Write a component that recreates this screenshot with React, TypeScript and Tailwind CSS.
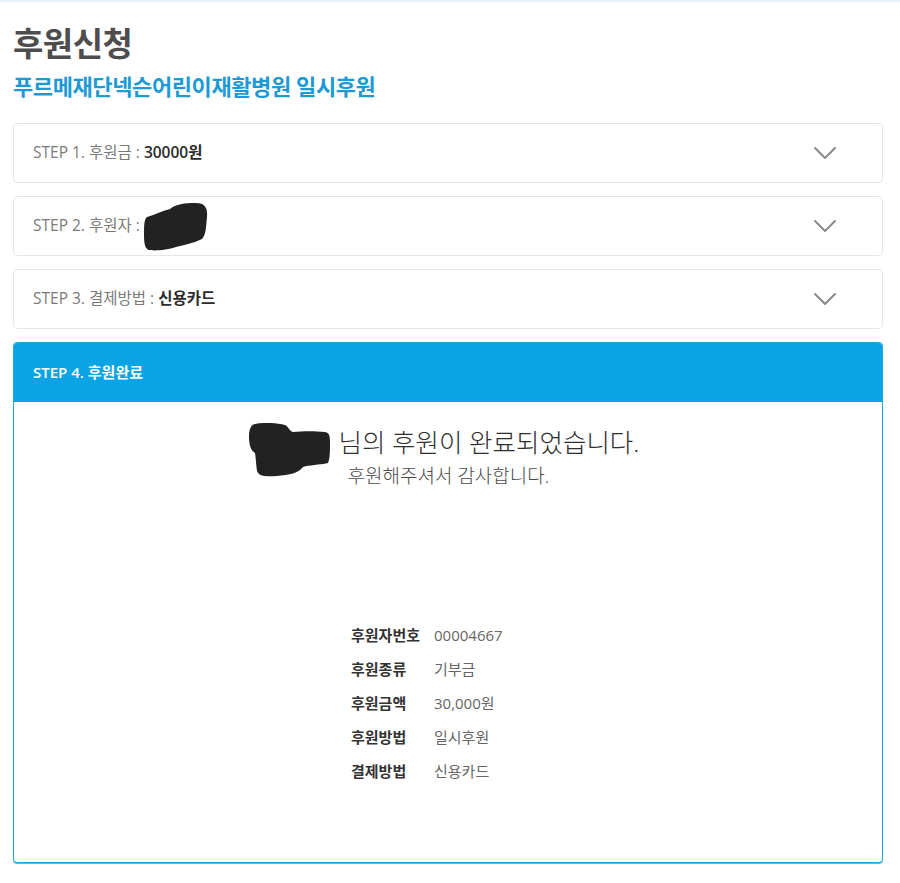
import { ChevronDown } from 'lucide-react'

const font = { fontFamily: '"Open Sans", "Noto Sans CJK KR", sans-serif' }

function StepCard({ label, value, blob }: { label: string; value?: string; blob?: boolean }) {
  return (
    <div className="flex h-[60px] items-center justify-between rounded-[4px] border border-[#e6e6e6] bg-white pl-[19px] pr-[37px]">
      <div className="flex items-center text-[15.5px] text-[#7a7a7a]">
        <span>{label} :&nbsp;</span>
        {value && <span className="font-semibold text-[#2b2b2b]">{value}</span>}
        {blob && <BlobOne />}
      </div>
      <ChevronDown className="h-10 w-10 text-[#8a8a8a]" strokeWidth={1.2} />
    </div>
  )
}

function BlobOne() {
  return (
    <svg width="66" height="48" viewBox="0 0 66 48" className="mt-[2px]">
      <path
        d="M3 14 C10 12 18 8 26 6 C32 1 40 0 52 0 C60 0 64 4 63 14 C62 24 62 32 58 36 C50 40 40 42 32 44 C24 47 10 48 5 47 C1 46 0 40 0 32 C0 24 0 16 3 14 Z"
        fill="#222"
      />
    </svg>
  )
}

function BlobTwo() {
  return (
    <svg width="82" height="54" viewBox="0 0 82 54" className="-mt-[2px] mr-[8px]">
      <path
        d="M6 1 C16 -1 28 0 36 2 C40 4 40 8 44 9 C54 8 66 8 76 9 C81 10 81 14 81 20 C81 28 81 36 79 40 C70 42 60 42 54 44 C50 50 40 52 28 53 C16 54 10 53 8 48 C7 42 7 36 6 30 C2 28 0 22 0 14 C0 8 1 2 6 1 Z"
        fill="#222"
      />
    </svg>
  )
}

const info = [
  ['후원자번호', '00004667'],
  ['후원종류', '기부금'],
  ['후원금액', '30,000원'],
  ['후원방법', '일시후원'],
  ['결제방법', '신용카드'],
]

export default function App() {
  return (
    <div className="min-h-[883px] w-[900px] border-t-2 border-[#e3f3f7] bg-white" style={font}>
      <div className="pl-[13px] pr-[17px]">
        <h1 className="pt-[20px] text-[33px] font-bold leading-[44px] tracking-[-0.5px] text-[#4d4d4d]">
          후원신청
        </h1>
        <h2 className="mt-[5px] text-[22px] font-bold leading-[30px] tracking-[-0.4px] text-[#1c9ad6]">
          푸르메재단넥슨어린이재활병원 일시후원
        </h2>

        <div className="mt-[22px] flex flex-col gap-[13px]">
          <StepCard label="STEP 1. 후원금" value="30000원" />
          <StepCard label="STEP 2. 후원자" blob />
          <StepCard label="STEP 3. 결제방법" value="신용카드" />

          <div className="h-[521px] overflow-hidden rounded-[4px] border border-[#1ea4dc] bg-white shadow-[0_1px_0_#7fb0b8]">
            <div className="flex h-[59px] items-center bg-[#0aa4e4] px-[19px] text-[15px] font-semibold text-white">
              STEP 4. 후원완료
            </div>
            <div className="flex flex-col items-center pt-[23px]">
              <div className="flex items-start pr-[8px]">
                <BlobTwo />
                <div className="flex flex-col">
                  <span className="text-[25.5px] font-light leading-[34px] text-[#2e2e2e]">
                    님의 후원이 완료되었습니다.
                  </span>
                  <span className="ml-[9px] mt-[4px] text-[19px] font-light leading-[26px] text-[#4a4a4a]">
                    후원해주셔서 감사합니다.
                  </span>
                </div>
              </div>

              <div className="mt-[136px] grid w-[194px] grid-cols-[83px_1fr] gap-y-[14px] text-[15px] leading-[20px]">
                {info.map(([k, v]) => (
                  <div key={k} className="contents">
                    <span className="font-bold text-[#333]">{k}</span>
                    <span className="text-[#666]">{v}</span>
                  </div>
                ))}
              </div>
            </div>
          </div>
        </div>
      </div>
    </div>
  )
}
